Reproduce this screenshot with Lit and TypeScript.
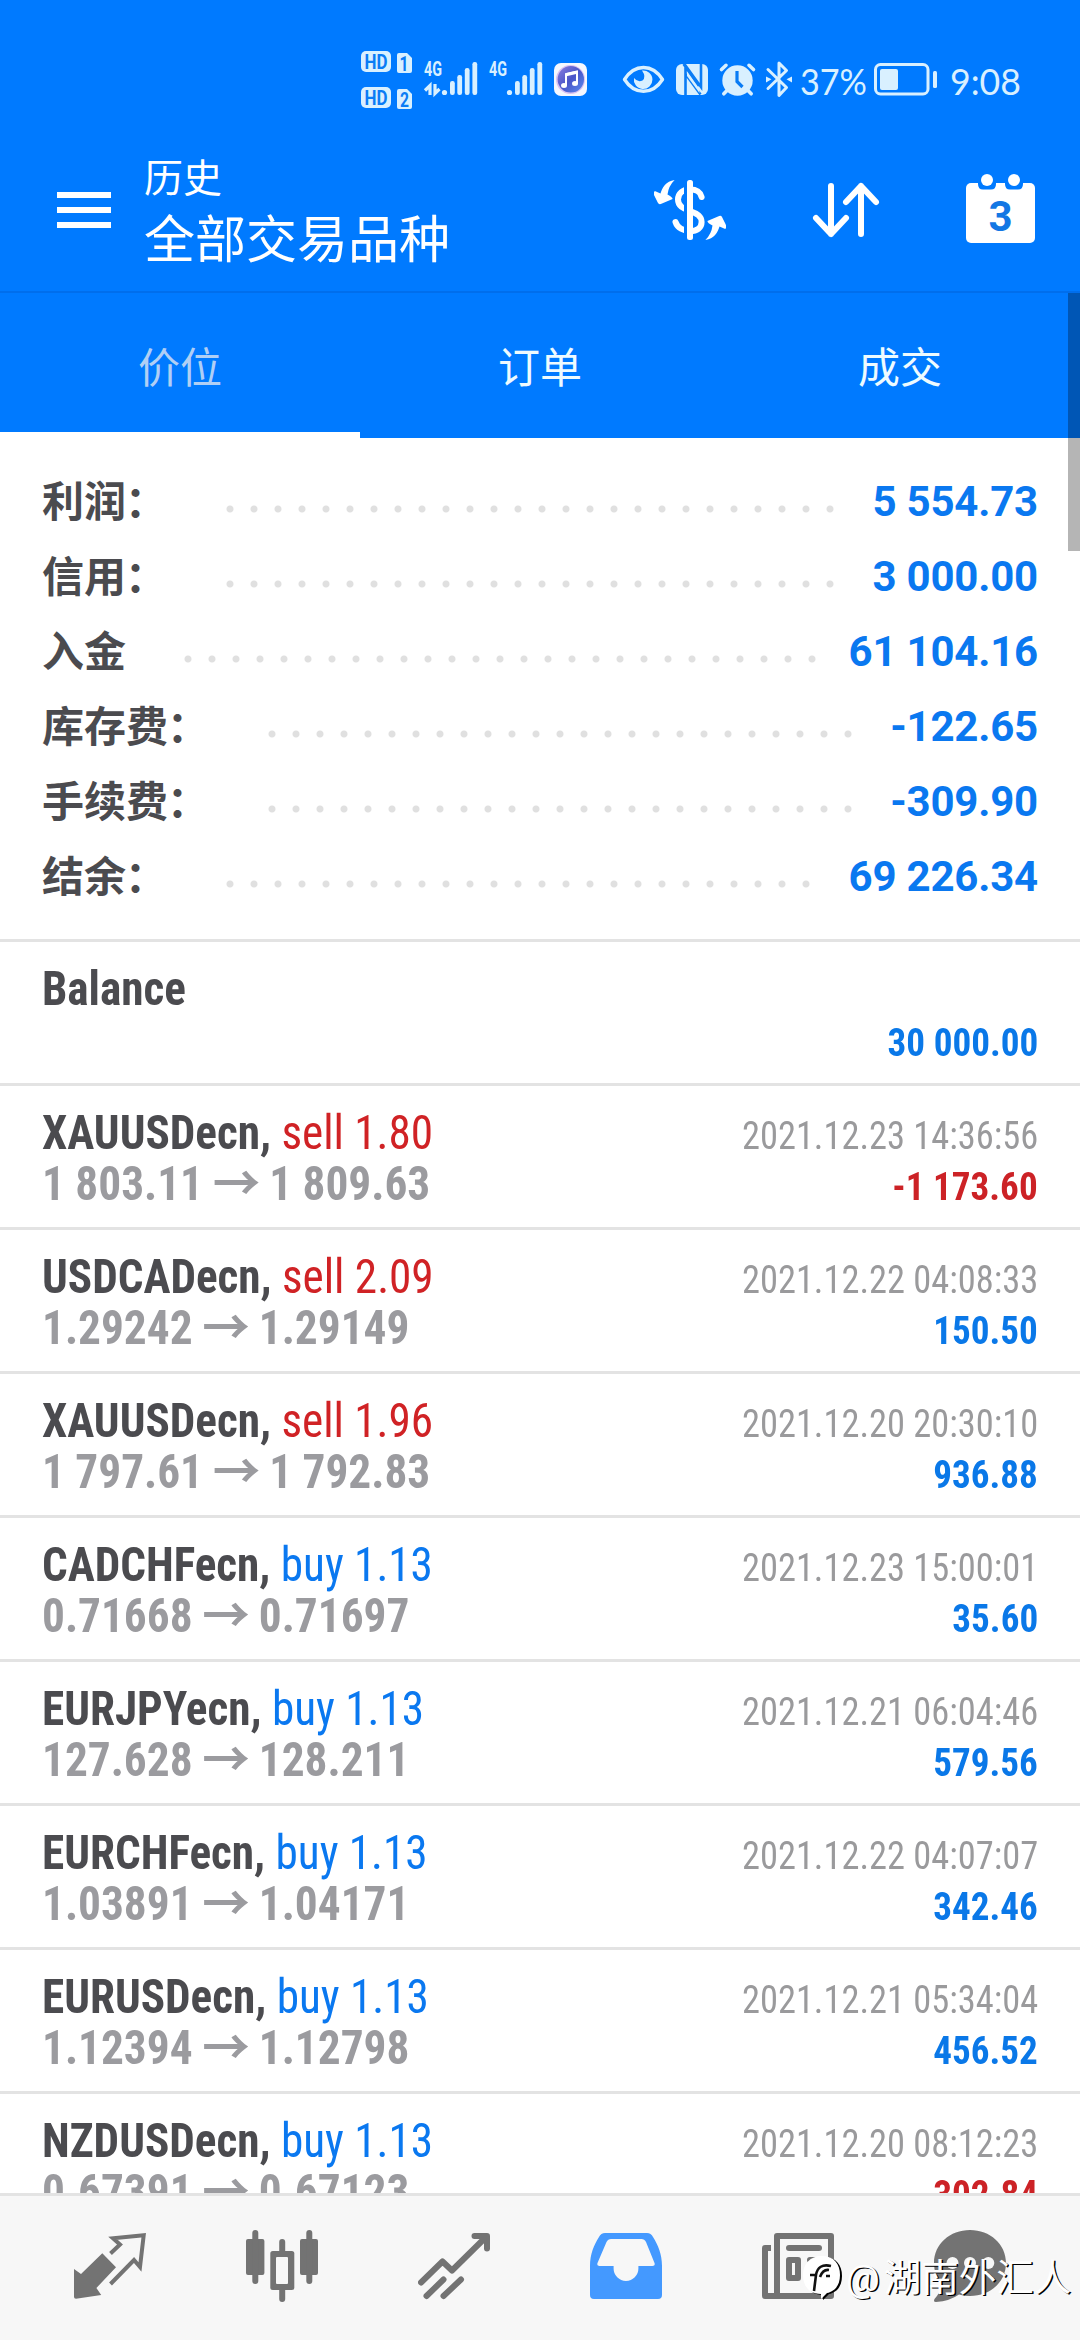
import { LitElement, html, svg, css } from "lit";
import { customElement } from "lit/decorators.js";
import { classMap } from "lit/directives/class-map.js";

interface Deal {
  symbol: string;
  side?: "buy" | "sell";
  lots?: string;
  open?: string;
  close?: string;
  time?: string;
  profit: string;
}

const SUMMARY: [string, string, string][] = [
  ["利润", "：", "5 554.73"],
  ["信用", "：", "3 000.00"],
  ["入金", "", "61 104.16"],
  ["库存费", "：", "-122.65"],
  ["手续费", "：", "-309.90"],
  ["结余", "：", "69 226.34"],
];

const DEALS: Deal[] = [
  { symbol: "Balance", profit: "30 000.00" },
  { symbol: "XAUUSDecn", side: "sell", lots: "1.80", open: "1 803.11", close: "1 809.63", time: "2021.12.23 14:36:56", profit: "-1 173.60" },
  { symbol: "USDCADecn", side: "sell", lots: "2.09", open: "1.29242", close: "1.29149", time: "2021.12.22 04:08:33", profit: "150.50" },
  { symbol: "XAUUSDecn", side: "sell", lots: "1.96", open: "1 797.61", close: "1 792.83", time: "2021.12.20 20:30:10", profit: "936.88" },
  { symbol: "CADCHFecn", side: "buy", lots: "1.13", open: "0.71668", close: "0.71697", time: "2021.12.23 15:00:01", profit: "35.60" },
  { symbol: "EURJPYecn", side: "buy", lots: "1.13", open: "127.628", close: "128.211", time: "2021.12.21 06:04:46", profit: "579.56" },
  { symbol: "EURCHFecn", side: "buy", lots: "1.13", open: "1.03891", close: "1.04171", time: "2021.12.22 04:07:07", profit: "342.46" },
  { symbol: "EURUSDecn", side: "buy", lots: "1.13", open: "1.12394", close: "1.12798", time: "2021.12.21 05:34:04", profit: "456.52" },
  { symbol: "NZDUSDecn", side: "buy", lots: "1.13", open: "0.67391", close: "0.67123", time: "2021.12.20 08:12:23", profit: "-302.84" },
];

@customElement("status-bar")
export class StatusBar extends LitElement {
  static styles = css`
    :host {
      display: flex;
      height: 64px;
      padding: 48px 0 0 358px;
    }
    svg {
      display: block;
      flex: none;
      fill: #d9f0ff;
    }
    .line {
      fill: none;
      stroke: #d9f0ff;
    }
    .tag {
      font: 700 20px Roboto, sans-serif;
      fill: #0a7cf5;
    }
    .net {
      font: 700 20px Roboto, sans-serif;
    }
    .num {
      font: 400 37px Lato, sans-serif;
    }
  `;

  // Each glyph shares the bar's coordinate space, so neighbours sit flush.
  private cell(x: number, w: number, body: unknown) {
    return html`<svg width=${w} height="64" viewBox="${x} 48 ${w} 64">${body}</svg>`;
  }

  private bars(x: number) {
    return svg`
      <text class="net" x=${x} y="76" textLength="18" lengthAdjust="spacingAndGlyphs">4G</text>
      <circle cx=${x + 20.5} cy="92.5" r="2.6"/>
      <rect x=${x + 26} y="81" width="4.8" height="14" rx="2.2"/>
      <rect x=${x + 33.3} y="75" width="4.8" height="20" rx="2.2"/>
      <rect x=${x + 40.8} y="68" width="4.8" height="27" rx="2.2"/>
      <rect x=${x + 48.4} y="62" width="4.8" height="33" rx="2.2"/>`;
  }

  render() {
    return html`
      ${this.cell(358, 60, svg`
        <rect x="361" y="51" width="30" height="21" rx="5"/>
        <rect x="361" y="87" width="30" height="21" rx="5"/>
        <path d="M399 53H407L412 58V71Q412 73 410 73H399Q397 73 397 71V55Q397 53 399 53Z"/>
        <path d="M399 89H407L412 94V107Q412 109 410 109H399Q397 109 397 107V91Q397 89 399 89Z"/>
        <text class="tag" x="364.5" y="69" textLength="23" lengthAdjust="spacingAndGlyphs">HD</text>
        <text class="tag" x="364.5" y="105" textLength="23" lengthAdjust="spacingAndGlyphs">HD</text>
        <text class="tag" x="399.5" y="70.5" textLength="9" lengthAdjust="spacingAndGlyphs">1</text>
        <text class="tag" x="400" y="106.5" textLength="9" lengthAdjust="spacingAndGlyphs">2</text>`)}
      ${this.cell(418, 66, svg`
        ${this.bars(424)}
        <path class="line" stroke-width="3.2" d="M430 95V85.5L425 90.5M435 84V93.5L439.5 89"/>`)}
      ${this.cell(484, 64, this.bars(489))}
      ${this.cell(548, 62, svg`
        <defs><linearGradient id="disc" x1="0" y1="0" x2="1" y2="1">
          <stop offset="0" stop-color="#8d7fe0"/><stop offset=".5" stop-color="#4a55c8"/><stop offset="1" stop-color="#5a8df0"/>
        </linearGradient></defs>
        <rect x="554" y="63" width="33" height="33" rx="7" fill="#f4f7ff"/>
        <circle cx="570.5" cy="79.5" r="14.5" fill="#d9c2f2"/>
        <circle cx="570.8" cy="79.3" r="13.2" fill="url(#disc)"/>
        <path fill="none" stroke="#fff" stroke-width="2" d="M566 85V74L577 71.5V83"/>
        <path fill="none" stroke="#fff" stroke-width="3" d="M566 74.8L577 72.3"/>
        <ellipse cx="564" cy="85.5" rx="3" ry="2.5" fill="#fff"/><ellipse cx="575" cy="83.5" rx="3" ry="2.5" fill="#fff"/>`)}
      ${this.cell(610, 60, svg`
        <path class="line" stroke-width="3.4" stroke-linejoin="round" d="M624.5 79.5Q632 67.5 643.5 67.5T662.5 79.5Q655 91.3 643.5 91.3T624.5 79.5Z"/>
        <path d="M642 70.5A9.3 9.3 0 1 1 634 78Q638 83 642.5 80.5Q646.5 77 642 70.5Z"/>`)}
      ${this.cell(670, 45, svg`
        <rect x="676" y="64" width="32" height="31" rx="6"/>
        <path fill="none" stroke="#0a7cf5" stroke-width="2.6" d="M685.5 95V65.5L701 87V64M683.5 64L699 86M685.5 74L700.5 94.5"/>
        <path d="M687 72L699.5 89.5V93L687 76Z"/>`)}
      ${this.cell(715, 45, svg`
        <circle cx="737.5" cy="80.5" r="15.2"/>
        <path class="line" stroke-width="3.6" stroke-linecap="round" d="M721.5 69.5L726 65.3M753.5 69.5L749 65.3M727 90.5L723.8 93.8M748 90.5L751.2 93.8"/>
        <path fill="none" stroke="#0a7cf5" stroke-width="3.2" d="M737 71V81.5L742.5 87"/>`)}
      ${this.cell(760, 38, svg`
        <path class="line" stroke-width="3" stroke-linejoin="round" stroke-linecap="round" d="M768 69.5L786.5 87.5L779 95.5V63L786.5 70.5L768 88.5"/>
        <path d="M766 76.5L771.5 79.3L766 82.5ZM792 76.5L786.5 79.3L792 82.5Z"/>`)}
      ${this.cell(798, 72, svg`<text class="num" x="800" y="94.5" textLength="67" lengthAdjust="spacingAndGlyphs">37%</text>`)}
      ${this.cell(870, 72, svg`
        <rect class="line" x="875.5" y="64.5" width="52.5" height="29.5" rx="5" stroke-width="3"/>
        <rect x="880" y="69" width="18" height="21" rx="2"/>
        <rect x="933" y="71" width="4" height="17" rx="1.5"/>`)}
      ${this.cell(942, 90, svg`<text class="num" x="950" y="94.5" textLength="71" lengthAdjust="spacingAndGlyphs">9:08</text>`)}
    `;
  }
}

@customElement("history-header")
export class HistoryHeader extends LitElement {
  static styles = css`
    :host {
      display: flex;
      height: 179px;
      padding: 0 44px 0 57px;
      border-bottom: 2px solid #006eec;
      color: #fff;
    }
    .menu {
      display: flex;
      flex-direction: column;
      gap: 9px;
      width: 54px;
      padding-top: 80px;
    }
    .bar {
      height: 6px;
      background: #fff;
    }
    .titles {
      flex: 1;
      padding: 39px 0 0 33px;
    }
    .section {
      font-size: 39px;
      line-height: 56px;
    }
    .title {
      font-size: 51px;
      line-height: 68px;
    }
    .actions {
      display: flex;
      gap: 84px;
      padding-top: 62px;
    }
    svg {
      display: block;
      fill: #fff;
    }
    .sort {
      margin-right: -2px;
    }
    .day {
      font: 700 42px Roboto, sans-serif;
      fill: #1377e4;
      text-anchor: middle;
    }
  `;

  render() {
    const swoosh = svg`<path d="M20.6 6C12 7 8 14 6.5 19.5L.8 17Q-1 19 .5 22L4 29Q5 31 8 29.5L18.6 25Q18.5 23 13.5 20.5Q14.5 12 20.6 6Z"/>`;
    return html`
      <div class="menu"><div class="bar"></div><div class="bar"></div><div class="bar"></div></div>
      <div class="titles">
        <div class="section">历史</div>
        <div class="title">全部交易品种</div>
      </div>
      <div class="actions">
        <svg width="72" height="72" viewBox="0 0 72 72">
          <path fill="none" stroke="#fff" stroke-width="6" stroke-linecap="round" d="M47.6 23C46 17 42 15.5 36 15.5C28.5 15.5 24 19.5 24 25.5C24 32 29 34.5 36 37C43 39.5 47.6 42 47.6 48C47.6 54 43 57 36 57C29.5 57 23.5 54 21.5 48"/>
          <rect x="30" y="5" width="3" height="62" fill="#007aff"/>
          <rect x="33" y="6" width="6" height="60" rx="2.5"/>
          ${swoosh}
          <g transform="rotate(180 36 36)">${swoosh}</g>
        </svg>
        <svg class="sort" width="72" height="72" viewBox="0 0 72 72">
          <path fill="none" stroke="#fff" stroke-width="6" stroke-linecap="round" stroke-linejoin="round" d="M21 12V60M6 44L21 60L36 44M51 60V12M36 28L51 12L66 28"/>
        </svg>
        <svg width="72" height="72" viewBox="0 0 72 72">
          <rect x="2" y="9" width="69" height="60" rx="5"/>
          <path fill="#007aff" d="M14 8V10Q14 15.5 19 15.5H27Q32 15.5 32 10V8ZM41 8V10Q41 15.5 46 15.5H54Q59 15.5 59 10V8Z"/>
          <circle cx="23" cy="6" r="6"/><circle cx="50" cy="6" r="6"/>
          <text class="day" x="36.5" y="56.5">3</text>
        </svg>
      </div>
    `;
  }
}

@customElement("deal-row")
export class DealRow extends LitElement {
  static properties = { deal: { attribute: false } };
  declare deal: Deal;

  static styles = css`
    :host {
      display: block;
      height: 120px;
      padding: 21px 42px 0 42px;
      border-top: 3px solid #e3e3e3;
      font-family: "Roboto Condensed", Roboto, "Noto Sans CJK SC", sans-serif;
      font-stretch: 75%;
    }
    .line {
      display: flex;
      justify-content: space-between;
      align-items: baseline;
      height: 51px;
      line-height: 51px;
      white-space: pre;
    }
    .name {
      font-size: 48px;
      font-weight: 700;
      transform: scaleX(0.941);
      transform-origin: left;
      color: #4b4b4f;
    }
    .side {
      font-weight: 400;
      color: #0a78f0;
    }
    .sell {
      color: #d02225;
    }
    .time {
      font-size: 39px;
      transform: scaleX(0.934);
      transform-origin: right;
      color: #9a9a9c;
    }
    .prices {
      font-size: 48px;
      font-weight: 700;
      transform: scaleX(0.944);
      transform-origin: left;
      color: #9b9b9f;
    }
    .prices::before {
      content: "\\200b";
    }
    .arrow {
      display: inline-block;
      height: 0;
      line-height: 0;
      font-family: "Noto Sans CJK SC", sans-serif;
      transform: scaleX(1.05);
    }
    .profit {
      font-size: 39px;
      font-weight: 700;
      transform: scaleX(0.952);
      transform-origin: right;
      color: #0a78e8;
    }
    .loss {
      color: #cc2226;
    }
  `;

  render() {
    const d = this.deal;
    return html`
      <div class="line">
        <span class="name">${d.symbol}${d.side
          ? html`, <span class=${classMap({ side: true, sell: d.side === "sell" })}>${d.side} ${d.lots}</span>`
          : ""}</span>
        <span class="time">${d.time}</span>
      </div>
      <div class="line">
        <span class="prices">${d.open ? html`${d.open} <span class="arrow">→</span> ${d.close}` : ""}</span>
        <span class=${classMap({ profit: true, loss: d.profit.startsWith("-") })}>${d.profit}</span>
      </div>
    `;
  }
}

@customElement("bottom-nav")
export class BottomNav extends LitElement {
  static styles = css`
    :host {
      position: relative;
      display: flex;
      flex: none;
      height: 144px;
      padding: 0 24px;
      border-top: 3px solid #e3e3e3;
      background: #f7f7f7;
    }
    .item {
      flex: 1;
      display: flex;
      justify-content: center;
      padding-top: 34px;
    }
    svg {
      display: block;
      fill: #737373;
    }
    .stroke {
      fill: none;
      stroke: #737373;
      stroke-width: 6;
      stroke-linecap: round;
      stroke-linejoin: round;
    }
    .mark {
      position: absolute;
      left: 802px;
      top: 57px;
      display: flex;
      align-items: center;
      gap: 4px;
      font-size: 37.5px;
      line-height: 50px;
      color: #fff;
      text-shadow: 1.5px 1px 0.5px #000;
      white-space: nowrap;
    }
    .at {
      margin-right: 4px;
    }
    .mark svg {
      fill: #fff;
      filter: drop-shadow(2px 1px 0 #000);
    }
  `;

  render() {
    const icons = [
      svg`<path d="M0 39L7 44L28.3 23.3L42 37.3L22.4 58L27.2 65L2 68.7Q0 68.7 0 67Z"/>
        <path fill="none" stroke="#737373" stroke-width="4" d="M36.5 54L60 30L66 37L69.7 5.3L39 8.3L46 14.5L36.5 23.5"/>`,
      svg`<rect x="0" y="9" width="18.4" height="36" rx="2"/><rect x="6.3" y="0" width="6" height="54" rx="3"/>
        <rect x="54" y="9" width="18" height="36" rx="2"/><rect x="60.3" y="0" width="6" height="54" rx="3"/>
        <rect x="33.2" y="9" width="6" height="63" rx="3"/><rect x="24.3" y="21" width="24" height="39" rx="2.5"/>
        <rect x="30" y="27" width="12" height="27" rx="1" fill="#f7f7f7"/>`,
      svg`<path class="stroke" d="M3 52.5L24.5 31.5L34 40.5L68 7M56.5 6H69V18.5"/>
        <path class="stroke" d="M25.5 49.5L8.5 66M43 49.5L25.5 66"/>`,
      svg`<path fill="#4499ff" fill-rule="evenodd" d="M15 3H57Q61 3 63 7C68 15 72 24 72 36V65Q72 69 68 69H4Q0 69 0 65V36C0 24 4 15 9 7Q11 3 15 3ZM21 9Q18 9 16.5 12L7.5 33Q6.5 36 9.5 36H23.6V38.5A12.4 12.4 0 0 0 48.4 38.5V36H62.5Q65.5 36 64.5 33L56 12Q54.5 9 51.5 9Z"/>`,
      svg`<path d="M3 15H9V21H6V63H12V69H3Q0 69 0 66V18Q0 15 3 15Z"/>
        <path fill-rule="evenodd" d="M15 3H69Q72 3 72 6V66Q72 69 69 69H12V6Q12 3 15 3ZM18 9V63H66V9Z"/>
        <rect x="24" y="15" width="36" height="6" rx="3"/>
        <path fill-rule="evenodd" d="M27 27H36Q39 27 39 30V48Q39 51 36 51H27Q24 51 24 48V30Q24 27 27 27ZM30 33V45H33V33Z"/>
        <rect x="45" y="27" width="15" height="6" rx="3"/><rect x="45" y="39" width="15" height="6" rx="3"/>`,
      svg`<path d="M36 0C56 0 72 14 72 33S56 66 36 66Q30 66 25 64.5Q16 71 2 72Q-1 72 .5 69Q6 63 8 55Q0 46 0 33C0 14 16 0 36 0Z"/>
        <circle cx="18.5" cy="33" r="6" fill="#f7f7f7"/><circle cx="36" cy="33" r="6" fill="#f7f7f7"/><circle cx="54.3" cy="33" r="6" fill="#f7f7f7"/>`,
    ];
    return html`
      ${icons.map((i) => html`<div class="item"><svg width="72" height="72" viewBox="0 0 72 72">${i}</svg></div>`)}
      <div class="mark">
        <svg width="40" height="46" viewBox="0 0 40 46">
          <path d="M20 1C32 1 38 9 38 20C38 32 31 37 25 38L19 44V39C8 39 1 32 1 20C1 9 8 1 20 1Z"/>
          <path fill="none" stroke="#111" stroke-width="2.6" d="M8 20H14L12 36M14 20Q16 8 29 11M18 22Q21 14 27 15M24 21H28"/>
        </svg>
        <span><span class="at">@</span>湖南外汇人</span>
      </div>
    `;
  }
}

@customElement("app-root")
export class AppRoot extends LitElement {
  static styles = css`
    :host {
      position: relative;
      display: flex;
      flex-direction: column;
      width: 1080px;
      height: 2340px;
      overflow: hidden;
      background: #fff;
      font-family: Roboto, "Noto Sans CJK SC", sans-serif;
    }
    .top {
      flex: none;
      background: #007aff;
    }
    .tabs {
      display: flex;
      height: 145px;
    }
    .tab {
      flex: 1;
      box-sizing: border-box;
      padding-top: 3px;
      border-bottom: 6px solid #007aff;
      text-align: center;
      font-size: 42px;
      line-height: 146px;
      height: 145px;
      color: #eefbff;
    }
    .current {
      border-bottom-color: #fff;
      color: #b0cff5;
    }
    .summary {
      flex: none;
      padding: 26px 42px 25px;
    }
    .entry {
      display: flex;
      height: 75px;
      line-height: 75px;
      font-size: 42px;
      font-weight: 700;
    }
    .label {
      color: #4b4b4f;
      font-family: "Noto Sans CJK SC", sans-serif;
      line-height: 70px;
    }
    .colon {
      margin: 0 1px 0 -1px;
    }
    .leader {
      flex: 1;
      margin: 0 25px 0 50px;
      background: radial-gradient(circle at 12px 45px, #e0e0e0 3px, transparent 4px) 0 0 / 24px 75px repeat-x;
    }
    .value {
      letter-spacing: -0.2px;
      color: #0a78f0;
    }
    .deals {
      flex: 1;
      min-height: 0;
      overflow: hidden;
    }
    .thumb {
      position: absolute;
      top: 293px;
      right: 0;
      width: 12px;
      height: 258px;
      background: rgba(0, 0, 0, 0.29);
    }
  `;

  render() {
    return html`
      <div class="top">
        <status-bar></status-bar>
        <history-header></history-header>
        <div class="tabs">
          <div class="tab current">价位</div>
          <div class="tab">订单</div>
          <div class="tab">成交</div>
        </div>
      </div>
      <div class="summary">
        ${SUMMARY.map(([label, colon, value]) => html`
          <div class="entry">
            <span class="label">${label}${colon ? html`<span class="colon">${colon}</span>` : ""}</span>
            <span class="leader"></span>
            <span class="value">${value}</span>
          </div>`)}
      </div>
      <div class="deals">${DEALS.map((d) => html`<deal-row .deal=${d}></deal-row>`)}</div>
      <bottom-nav></bottom-nav>
      <div class="thumb"></div>
    `;
  }
}
